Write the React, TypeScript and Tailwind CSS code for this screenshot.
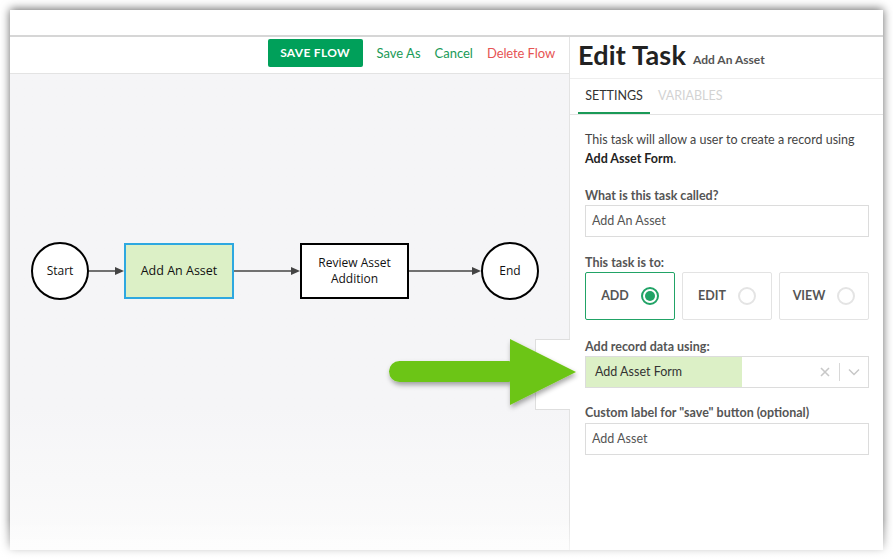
import React from "react";

const font = { fontFamily: "Lato, 'Open Sans', sans-serif" };

function Arrow({ w }: { w: number }) {
  return (
    <svg width={w} height="10" viewBox={`0 0 ${w} 10`} className="block">
      <line x1="0" y1="5" x2={w - 8} y2="5" stroke="#444" strokeWidth="1.5" />
      <polygon points={`${w - 9},1 ${w},5 ${w - 9},9`} fill="#444" />
    </svg>
  );
}

function Radio({ on }: { on?: boolean }) {
  return on ? (
    <span className="w-[18px] h-[18px] rounded-full border-[2px] border-[#21a366] flex items-center justify-center">
      <span className="w-[10px] h-[10px] rounded-full bg-[#21a366]" />
    </span>
  ) : (
    <span className="w-[18px] h-[18px] rounded-full border-[2px] border-[#e4e4e4]" />
  );
}

export default function App() {
  return (
    <div className="w-[893px] h-[560px] bg-white relative overflow-hidden pt-[10px] pl-[10px]" style={font}>
      <div className="w-[873px] h-[540px] bg-white flex flex-col shadow-[0_-1px_9px_rgba(0,0,0,0.6)]">
        <div className="h-[25px] bg-white" />
        <div className="h-[2px] bg-[#d6d6d6]" />
        <div className="flex flex-1 min-h-0">
          {/* left */}
          <div className="w-[559px] flex flex-col">
            <div className="h-[37px] border-b border-[#e3e3e3] flex items-start justify-end pr-[14px] pt-[2px]">
              <button className="w-[95px] h-[28px] bg-[#00a05a] rounded-[2px] text-white text-[12px] font-bold tracking-[0.3px]">
                SAVE FLOW
              </button>
              <span className="ml-[14px] mt-[5px] text-[13px] text-[#1a9a57]">Save As</span>
              <span className="ml-[14px] mt-[5px] text-[13px] text-[#1a9a57]">Cancel</span>
              <span className="ml-[14px] mt-[5px] text-[13px] text-[#e65454] tracking-[-0.1px]">Delete Flow</span>
            </div>
            <div className="flex-1 bg-gradient-to-b from-[#f5f5f7] from-70% to-[#fbfbfb]">
              <div
                className="flex items-center pl-[21px] pt-[168px]"
                style={{ fontFamily: "'Open Sans', 'Noto Sans', sans-serif" }}
              >
                <div className="w-[58px] h-[58px] rounded-full border-[2px] border-black bg-white flex items-center justify-center text-[12px] text-[#111]">
                  Start
                </div>
                <Arrow w={35} />
                <div className="w-[110px] h-[56px] border-[2px] border-[#2ea8e0] bg-[#dcf0c6] flex items-center justify-center text-[12.5px] text-[#111]">
                  Add An Asset
                </div>
                <Arrow w={66} />
                <div className="w-[109px] h-[56px] border-[2px] border-black bg-white flex flex-col items-center justify-center text-center text-[12px] leading-[16px] text-[#111]">
                  <span>Review Asset</span>
                  <span>Addition</span>
                </div>
                <Arrow w={72} />
                <div className="w-[58px] h-[58px] rounded-full border-[2px] border-black bg-white flex items-center justify-center text-[12px] text-[#111]">
                  End
                </div>
              </div>
            </div>
          </div>
          {/* right */}
          <div className="w-[314px] border-l border-[#e3e3e3] flex flex-col">
            <div className="h-[42px] border-b border-[#eeeeee] flex items-end pl-[8px] pb-[9px]">
              <span className="text-[27px] leading-[28px] font-bold text-[#222] tracking-[0.2px]">Edit Task</span>
              <span className="ml-[7px] text-[12px] font-bold text-[#555] leading-[14px] mb-[2px]">Add An Asset</span>
            </div>
            <div className="h-[36px] border-b border-[#e3e3e3] flex items-end pl-[8px]">
              <div className="w-[72px] h-[34px] border-b-[2px] border-[#1a9a57] flex items-end justify-center pb-[6px] text-[12.5px] text-[#333]">
                SETTINGS
              </div>
              <div className="h-[34px] ml-[8px] flex items-end pb-[8px] text-[12.5px] text-[#d3d3d3]">VARIABLES</div>
            </div>
            <div className="pl-[15px] pr-[14px] pt-[15px] text-[#444]">
              <p className="text-[12.5px] leading-[19px]">
                This task will allow a user to create a record using
                <br />
                <span className="font-bold text-[#222]">Add Asset Form</span>.
              </p>
              <div className="mt-[20px] text-[12.5px] font-bold text-[#555] leading-[16px]">What is this task called?</div>
              <div className="mt-[1px] h-[32px] border border-[#dcdcdc] flex items-center pl-[6px] text-[12.5px] text-[#555]">
                Add An Asset
              </div>
              <div className="mt-[18px] text-[12.5px] font-bold text-[#555] leading-[16px]">This task is to:</div>
              <div className="mt-[1px] flex gap-[7px]">
                <div className="w-[90px] h-[48px] border border-[#21a366] rounded-[2px] flex items-center justify-center gap-[12px] text-[12.5px] font-bold text-[#555]">
                  ADD <Radio on />
                </div>
                <div className="w-[90px] h-[48px] border border-[#e3e3e3] rounded-[2px] flex items-center justify-center gap-[12px] text-[12.5px] font-bold text-[#555]">
                  EDIT <Radio />
                </div>
                <div className="w-[90px] h-[48px] border border-[#e3e3e3] rounded-[2px] flex items-center justify-center gap-[12px] text-[12.5px] font-bold text-[#555]">
                  VIEW <Radio />
                </div>
              </div>
              <div className="mt-[19px] text-[12.5px] font-bold text-[#555] leading-[16px]">Add record data using:</div>
              <div className="mt-[1px] h-[32px] border border-[#dcdcdc] flex items-stretch">
                <div className="w-[156px] bg-[#dcf0c6] flex items-center pl-[9px] text-[12.5px] text-[#333]">
                  Add Asset Form
                </div>
                <div className="flex-1" />
                <div className="flex items-center pr-[8px] text-[#c4c4c4]">
                  <svg width="10" height="10" viewBox="0 0 10 10" className="mr-[9px]">
                    <path d="M1 1L9 9M9 1L1 9" stroke="#c8c8c8" strokeWidth="1.6" />
                  </svg>
                  <span className="w-px h-[18px] bg-[#d8d8d8]" />
                  <svg width="12" height="8" viewBox="0 0 12 8" className="ml-[8px]">
                    <path d="M1 1.5L6 6.5L11 1.5" stroke="#c8c8c8" strokeWidth="1.5" fill="none" />
                  </svg>
                </div>
              </div>
              <div className="mt-[17px] text-[12.5px] font-bold text-[#555] leading-[16px]">
                Custom label for "save" button (optional)
              </div>
              <div className="mt-[2px] h-[32px] border border-[#dcdcdc] flex items-center pl-[6px] text-[12.5px] text-[#555]">
                Add Asset
              </div>
            </div>
          </div>
        </div>
      </div>

      {/* popover stub behind arrow */}
      <div className="absolute left-[535px] top-[339px] w-[35px] h-[71px] bg-white border-l border-t border-b border-[#dedede]" />

      {/* green arrow annotation */}
      <svg className="absolute left-[380px] top-[330px]" width="210" height="90" viewBox="380 330 210 90">
        <defs>
          <filter id="ds" x="-20%" y="-30%" width="140%" height="160%">
            <feDropShadow dx="1" dy="3" stdDeviation="2.5" floodColor="#000" floodOpacity="0.35" />
          </filter>
        </defs>
        <g filter="url(#ds)">
          <rect x="389" y="361" width="130" height="21" rx="10.5" fill="#6cc516" />
          <polygon points="510,339 576,372 510,405" fill="#6cc516" />
        </g>
      </svg>

      {/* bottom fade */}
      <div className="absolute left-0 right-0 bottom-0 h-[40px] bg-gradient-to-b from-transparent to-white/80" />
    </div>
  );
}
